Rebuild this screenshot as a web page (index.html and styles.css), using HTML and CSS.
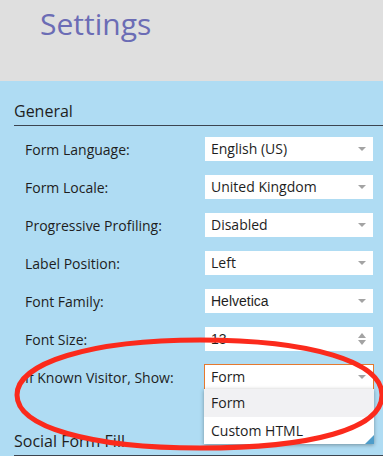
FILE: index.html
```html
<!DOCTYPE html>
<html>
    <head>
        <meta charset="utf-8">
        <title>Settings</title>
        <link rel="stylesheet" href="styles.css">
    </head>
    <body>
        <div class="page">
            <div class="top">
                <h1>Settings</h1>
            </div>

            <div class="panel">
                <h2 class="section">General</h2>

                <div class="rows">
                    <div class="row">
                        <span class="label">Form Language:</span>
                        <div class="field">English (US)<span class="arrow"></span></div>
                    </div>
                    <div class="row">
                        <span class="label">Form Locale:</span>
                        <div class="field">United Kingdom<span class="arrow"></span></div>
                    </div>
                    <div class="row">
                        <span class="label">Progressive Profiling:</span>
                        <div class="field">Disabled<span class="arrow"></span></div>
                    </div>
                    <div class="row">
                        <span class="label">Label Position:</span>
                        <div class="field">Left<span class="arrow"></span></div>
                    </div>
                    <div class="row">
                        <span class="label">Font Family:</span>
                        <div class="field helv">Helvetica<span class="arrow"></span></div>
                    </div>
                    <div class="row">
                        <span class="label">Font Size:</span>
                        <div class="field helv">13<span class="spin"><i class="up"></i><i class="down"></i></span></div>
                    </div>
                    <div class="row">
                        <span class="label">If Known Visitor, Show:</span>
                        <div class="field open">Form<span class="arrow"></span>
                            <ul class="menu">
                                <li class="hover">Form</li>
                                <li>Custom HTML</li>
                            </ul>
                        </div>
                    </div>
                </div>

                <h2 class="section social">Social Form Fill</h2>
            </div>

            <!-- red circle drawn over the screenshot -->
            <svg class="markup" width="383" height="456" viewBox="0 0 383 456">
                <path d="M17,395 C17,363 90,340 200,340 C312,340 382,362 382,395 C382,429 312,448 200,448 C90,448 17,427 17,395 Z" fill="none" stroke="#fb2a1c" stroke-width="5"/>
            </svg>
        </div>
    </body>
</html>
```

FILE: styles.css
```css
body {
  margin: 0;
  font-family: "Open Sans", "DejaVu Sans", sans-serif;
  color: #1e1e1e;
}
.page {
  position: relative;
  width: 383px;
  height: 456px;
  overflow: hidden;
  background: #afdcf3;
}
.top {
  background: #dfdfdf;
  height: 81px;
}
.top h1 {
  margin: 0;
  padding: 3px 0 0 40px;
  font-size: 30px;
  font-weight: normal;
  color: #6b6cb5;
  line-height: 41px;
}
.section {
  margin: 19px 0 0 14px;
  padding-bottom: 3px;
  border-bottom: 1px solid #3c4550;
  font-size: 16px;
  font-weight: normal;
  line-height: 22px;
}
.section.social {
  margin-top: 41px;
}
.rows {
  display: flex;
  flex-direction: column;
  gap: 14px;
  margin-top: 11px;
}
.row {
  display: flex;
  align-items: center;
  padding-left: 25px;
}
.label {
  flex: 0 0 180px;
  font-size: 14px;
}
.field {
  position: relative;
  width: 168px;
  height: 24px;
  box-sizing: border-box;
  padding-left: 6px;
  background: #fff;
  font-size: 14px;
  line-height: 24px;
}
.field.helv {
  font-family: "Liberation Sans", Arial, sans-serif;
}
.field.open {
  outline: 1px solid #e5792f;
}
.arrow {
  position: absolute;
  right: 7px;
  top: 10px;
  border-left: 4px solid transparent;
  border-right: 4px solid transparent;
  border-top: 4px solid #a3a3a3;
}
.spin {
  position: absolute;
  right: 7px;
  top: 6px;
  display: flex;
  flex-direction: column;
  gap: 2px;
}
.spin i {
  border-left: 4px solid transparent;
  border-right: 4px solid transparent;
}
.spin .up {
  border-bottom: 5px solid #a3a3a3;
}
.spin .down {
  border-top: 5px solid #a3a3a3;
}
.menu {
  position: absolute;
  top: 100%;
  left: -1px;
  right: -1px;
  margin: 0;
  padding: 0;
  list-style: none;
  background: #fff;
  box-shadow: 0 1px 4px rgba(0, 0, 0, 0.35);
}
.menu li {
  padding-left: 7px;
  height: 27px;
  line-height: 27px;
}
.menu li.hover {
  background: #f1f1f3;
  height: 28px;
  line-height: 28px;
}
.menu::after {
  content: "";
  position: absolute;
  right: 0;
  bottom: 0;
  border-left: 9px solid transparent;
  border-bottom: 9px solid #4e9dca;
}
.markup {
  position: absolute;
  left: 0;
  top: 0;
  pointer-events: none;
}
```
